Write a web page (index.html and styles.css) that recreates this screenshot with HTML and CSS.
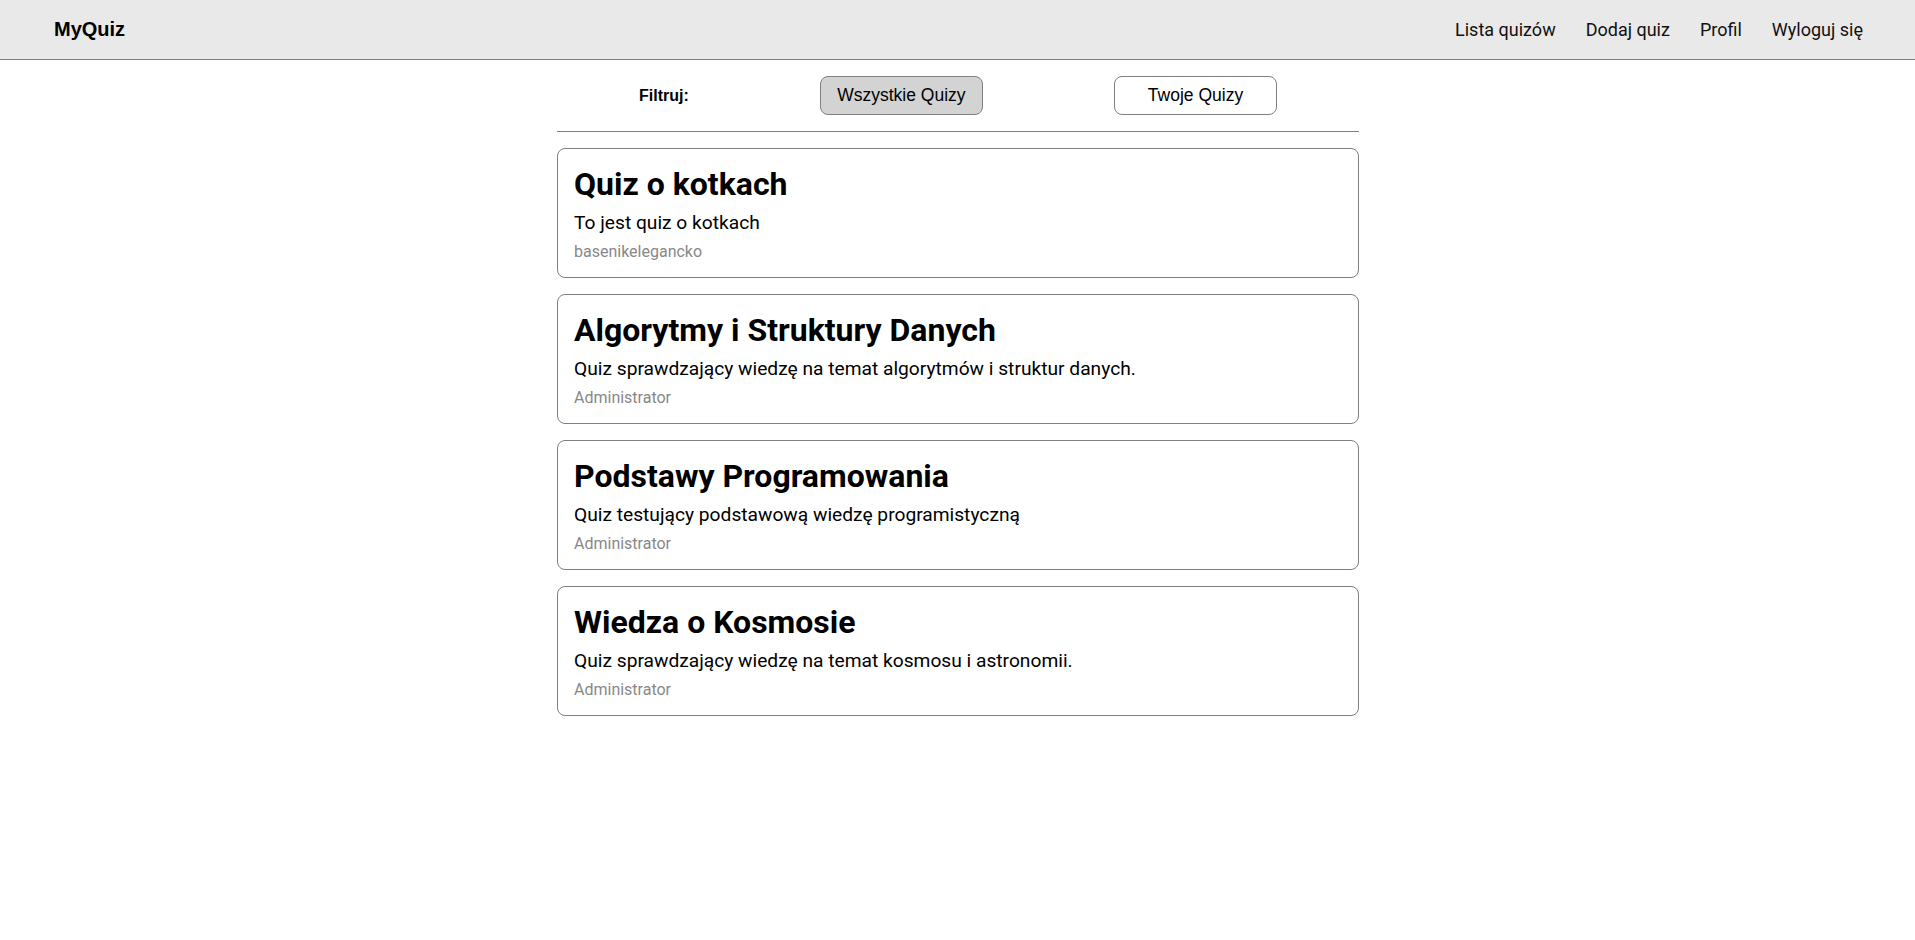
FILE: index.html
```html
<!DOCTYPE html>
<html lang="pl">
<head>
<meta charset="utf-8">
<title>MyQuiz</title>
<link rel="stylesheet" href="styles.css">
</head>
<body>
<header class="topbar">
  <div class="brand">MyQuiz</div>
  <nav class="nav">
    <a href="#">Lista quizów</a>
    <a href="#">Dodaj quiz</a>
    <a href="#">Profil</a>
    <a href="#">Wyloguj się</a>
  </nav>
</header>
<main class="content">
  <div class="filters">
    <span class="filter-label">Filtruj:</span>
    <button class="filter-btn active">Wszystkie Quizy</button>
    <button class="filter-btn">Twoje Quizy</button>
  </div>
  <div class="quiz-list">
    <div class="quiz-card">
      <h2 class="quiz-title">Quiz o kotkach</h2>
      <p class="quiz-desc">To jest quiz o kotkach</p>
      <div class="quiz-author">basenikelegancko</div>
    </div>
    <div class="quiz-card">
      <h2 class="quiz-title">Algorytmy i Struktury Danych</h2>
      <p class="quiz-desc">Quiz sprawdzający wiedzę na temat algorytmów i struktur danych.</p>
      <div class="quiz-author">Administrator</div>
    </div>
    <div class="quiz-card">
      <h2 class="quiz-title">Podstawy Programowania</h2>
      <p class="quiz-desc">Quiz testujący podstawową wiedzę programistyczną</p>
      <div class="quiz-author">Administrator</div>
    </div>
    <div class="quiz-card">
      <h2 class="quiz-title">Wiedza o Kosmosie</h2>
      <p class="quiz-desc">Quiz sprawdzający wiedzę na temat kosmosu i astronomii.</p>
      <div class="quiz-author">Administrator</div>
    </div>
  </div>
</main>
</body>
</html>
```
FILE: styles.css
```css
* { box-sizing: border-box; }
html, body {
  margin: 0;
  padding: 0;
  background: #fff;
  color: #000;
  font-family: Roboto, "Liberation Sans", Arial, sans-serif;
}
.topbar {
  height: 60px;
  background: #e9e9e9;
  border-bottom: 1px solid #808080;
  display: flex;
  align-items: center;
  justify-content: space-between;
  padding: 0 52px 0 54px;
}
.brand {
  font-family: "Liberation Sans", Arial, sans-serif;
  font-weight: bold;
  font-size: 20px;
}
.nav {
  display: flex;
  gap: 30px;
}
.nav a {
  color: #111;
  text-decoration: none;
  font-size: 18px;
}
.content {
  width: 802px;
  margin: 0 0 0 calc(50% - 400.5px);
}
.filters {
  display: flex;
  align-items: center;
  justify-content: space-between;
  padding: 16px 82px 16px 82px;
  border-bottom: 1px solid #808080;
}
.filter-label {
  font-family: "Liberation Sans", Arial, sans-serif;
  font-weight: bold;
  font-size: 16px;
}
.filter-btn {
  font-family: "Liberation Sans", Arial, sans-serif;
  font-size: 17.5px;
  color: #000;
  width: 163px;
  height: 39px;
  background: #fff;
  border: 1px solid #808080;
  border-radius: 8px;
  padding: 0;
}
.filter-btn.active {
  background: #d3d3d3;
}
.quiz-list {
  display: flex;
  flex-direction: column;
  gap: 16px;
  padding-top: 16px;
}
.quiz-card {
  border: 1px solid #808080;
  border-radius: 8px;
  padding: 16px;
}
.quiz-title {
  margin: 0 0 8px;
  font-size: 32px;
  font-weight: bold;
}
.quiz-desc {
  margin: 0 0 8px;
  font-size: 19.2px;
}
.quiz-author {
  font-size: 16px;
  color: #888;
}
```
